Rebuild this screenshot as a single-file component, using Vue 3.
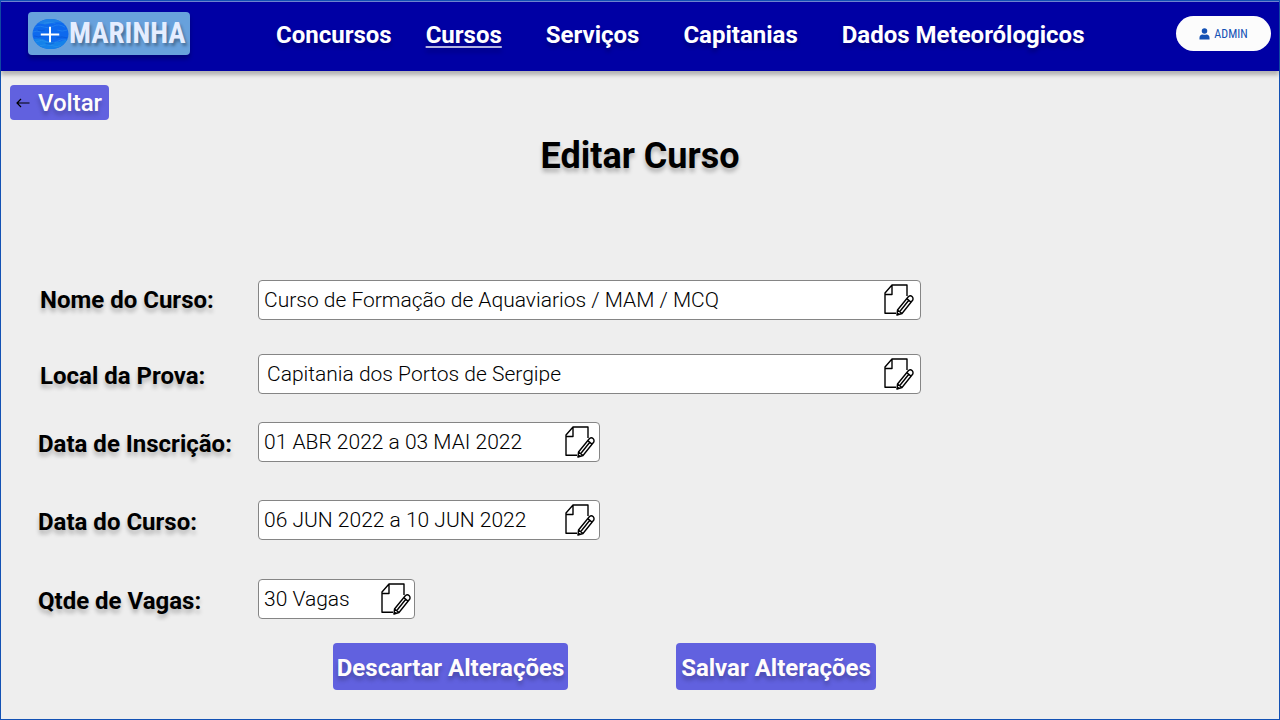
<script setup>
import { reactive } from 'vue'

const links = [
  { text: 'Concursos' },
  { text: 'Cursos', active: true },
  { text: 'Serviços' },
  { text: 'Capitanias' },
  { text: 'Dados Meteorólogicos' },
]

const fields = reactive([
  { id: 'nome', label: 'Nome do Curso:', value: 'Curso de Formação de Aquaviarios / MAM / MCQ', size: 'wide' },
  { id: 'local', label: 'Local da Prova:', value: 'Capitania dos Portos de Sergipe', size: 'wide' },
  { id: 'inscricao', label: 'Data de Inscrição:', value: '01 ABR 2022 a 03 MAI 2022', size: 'medium' },
  { id: 'curso', label: 'Data do Curso:', value: '06 JUN 2022 a 10 JUN 2022', size: 'medium' },
  { id: 'vagas', label: 'Qtde de Vagas:', value: '30 Vagas', size: 'small' },
])
</script>

<template>
  <div class="page">
    <header class="topbar">
      <a class="logo" href="#">
        <svg class="logo-mark" viewBox="0 0 38 32" aria-hidden="true">
          <defs>
            <clipPath id="sea"><ellipse cx="19" cy="16" rx="18.5" ry="15.5" /></clipPath>
          </defs>
          <g clip-path="url(#sea)">
            <rect width="38" height="32" fill="#0d69ee" />
            <path d="M0 3q12 5 20 2t18 2V0H0z" fill="#1c7fe8" />
            <path d="M0 22q8-3 15 1t23-2v11H0z" fill="#1482ea" />
            <path d="M3 9q6-2 10 0t9-1 12 1M1 14q4-2 8 0M26 12q5 2 10 0M4 24q6-3 11 0t10 0 10-2M8 28q7-2 13 0t9-1M12 5q6-2 12 0" fill="none" stroke="#3a9cf0" opacity=".4" />
            <path d="M2 18q5 2 9 0M25 20q6-2 11 0M6 12q4 1 7 0M14 26q5 1 9-1" fill="none" stroke="#0753cf" opacity=".6" />
          </g>
          <path d="M9 16.500h19M18.500 8.500v16" stroke="#fff" stroke-width="2" />
        </svg>
        <span class="logo-text">MARINHA</span>
      </a>
      <nav class="nav">
        <a v-for="l in links" :key="l.text" href="#" :class="{ active: l.active }">{{ l.text }}</a>
      </nav>
      <button class="admin" type="button">
        <svg viewBox="0 0 12 13" aria-hidden="true">
          <circle cx="6" cy="3.300" r="3" fill="#1351b4" />
          <path d="M.5 12.500V11q0-4 3.500-4 2 .8 4 0 3.500 0 3.500 4v1.500z" fill="#1351b4" />
        </svg>
        ADMIN
      </button>
    </header>

    <main class="content">
      <button class="back" type="button">
        <svg viewBox="0 0 14 10" aria-hidden="true">
          <path d="M13.500 5H1M5 1 1 5l4 4" fill="none" stroke="#000" stroke-width="1.200" />
        </svg>
        Voltar
      </button>
      <h1>Editar Curso</h1>

      <form class="form" @submit.prevent>
        <div v-for="f in fields" :key="f.id" class="row" :class="f.id">
          <label :for="f.id">{{ f.label }}</label>
          <div class="field" :class="f.size">
            <input :id="f.id" v-model="f.value" type="text" />
            <button class="edit" type="button" :aria-label="'Editar ' + f.label">
              <svg viewBox="0 0 30 32" aria-hidden="true">
                <g fill="none" stroke="#000" stroke-width="1.400" stroke-linejoin="round">
                  <path d="M12 29.300H1V9L8 1h15v11M1 10.500h7V1" />
                  <path d="M13.500 26 24.500 12.500q2-1.500 3.500 0t.8 3.500L18 29.500l-5 1.500zM13.500 26l4.500 3.500M22.800 14.600l4.400 3.600M15.800 27.500l9-11.200" />
                </g>
                <path d="m13.300 28-.5 3.200 3-1z" fill="#000" />
              </svg>
            </button>
          </div>
        </div>
        <div class="actions">
          <button class="discard" type="button">Descartar Alterações</button>
          <button class="save" type="submit">Salvar Alterações</button>
        </div>
      </form>
    </main>
  </div>
</template>

<style>
body {
  margin: 0;
}
</style>

<style scoped>
.page {
  box-sizing: border-box;
  min-height: 100vh;
  border: 1px solid #1351b4;
  background: #eee;
  font-family: Roboto, "Liberation Sans", sans-serif;
  color: #000;
}
.page * {
  box-sizing: border-box;
}
button,
input {
  font-family: inherit;
  margin: 0;
}
button {
  border: 0;
  cursor: pointer;
}
.topbar {
  display: flex;
  align-items: center;
  height: 70px;
  padding: 0 8px 0 27px;
  border-top: 1px solid #6c83cf;
  background: #0000a4;
  box-shadow: 0 4px 4px rgba(0, 0, 0, 0.25);
}
.logo {
  display: flex;
  align-items: center;
  width: 162px;
  height: 43px;
  margin-bottom: 6px;
  padding-left: 4px;
  border-radius: 4px;
  background: #68a1dc;
  box-shadow: 0 4px 4px rgba(0, 0, 0, 0.25);
  text-decoration: none;
  flex: none;
}
.logo-mark {
  width: 37px;
  height: 32px;
  flex: none;
}
.logo-text {
  font-family: "Roboto Condensed", "Liberation Sans Narrow", "Liberation Sans", sans-serif;
  font-weight: 700;
  font-size: 29px;
  line-height: 43px;
  color: #e4edff;
  text-shadow: 2px 3px 3px rgba(0, 0, 0, 0.3);
}
.nav {
  display: flex;
  flex: 1;
  gap: 44px;
  margin-left: 86px;
  padding-bottom: 3px;
}
.nav a {
  font-size: 24px;
  line-height: 28px;
  font-weight: 700;
  color: #fff;
  text-decoration: none;
  white-space: nowrap;
  text-shadow: 0 4px 4px rgba(0, 0, 0, 0.25);
}
.nav .active {
  margin-left: -10px;
  text-decoration: underline #b4b4e0 2px;
  text-underline-offset: 3px;
}
.admin {
  display: flex;
  align-items: center;
  justify-content: center;
  gap: 4px;
  width: 95px;
  height: 35px;
  margin-bottom: 6px;
  padding: 0;
  border-radius: 18px;
  background: #fcfcfc;
  color: #1351b4;
  font-family: "Roboto Condensed", "Liberation Sans Narrow", "Liberation Sans", sans-serif;
  font-size: 12px;
  flex: none;
}
.admin svg {
  width: 11px;
  height: 12px;
}
.back {
  display: flex;
  align-items: center;
  gap: 8px;
  width: 99px;
  height: 35px;
  margin: 14px 0 0 9px;
  padding: 0 0 0 6px;
  border-radius: 4px;
  background: #6161df;
  color: #fffcfc;
  font-size: 24px;
  font-weight: 500;
  text-shadow: 0 4px 4px rgba(0, 0, 0, 0.25);
}
.back svg {
  width: 14px;
  height: 10px;
}
h1 {
  margin: 15px 0 0;
  font-size: 36px;
  line-height: 43px;
  font-weight: 700;
  text-align: center;
  text-shadow: 0 4px 4px rgba(0, 0, 0, 0.25);
}
.form {
  margin-top: 102px;
  padding: 0 20px 29px 37px;
}
.row {
  display: grid;
  grid-template-columns: 220px minmax(0, 1fr);
  align-items: center;
}
label {
  padding-top: 4px;
  font-size: 24px;
  line-height: 28px;
  font-weight: 700;
  text-shadow: 0 4px 4px rgba(0, 0, 0, 0.25);
  white-space: nowrap;
}
.local {
  margin-top: 34px;
}
.inscricao {
  margin-top: 28px;
}
.curso {
  margin-top: 38px;
}
.vagas {
  margin-top: 39px;
}
.nome label {
  padding: 0 0 0 2px;
}
.local label {
  padding-left: 2px;
}
.field {
  display: flex;
  align-items: center;
  height: 40px;
  padding-right: 4px;
  border: 1px solid #858585;
  border-radius: 4px;
  background: #fff;
}
.wide {
  max-width: 663px;
  padding-right: 6px;
}
.medium {
  max-width: 342px;
}
.small {
  max-width: 157px;
  padding-right: 3px;
}
.field input {
  flex: 1;
  min-width: 0;
  height: 38px;
  padding: 0 0 0 5px;
  border: 0;
  outline: 0;
  background: transparent;
  color: #000;
  font-size: 21px;
  font-weight: 300;
}
.local .field input {
  padding-left: 8px;
}
.edit {
  display: flex;
  padding: 0;
  background: none;
}
.edit svg {
  width: 30px;
  height: 32px;
}
.actions {
  display: flex;
  gap: 108px;
  margin: 24px 0 0 295px;
}
.actions button {
  height: 47px;
  padding: 2px 0 0;
  border-radius: 4px;
  background: #6161df;
  color: #fffcfc;
  font-size: 24px;
  font-weight: 700;
  text-shadow: 0 4px 4px rgba(0, 0, 0, 0.25);
  white-space: nowrap;
}
.discard {
  width: 235px;
}
.save {
  width: 200px;
}
</style>
